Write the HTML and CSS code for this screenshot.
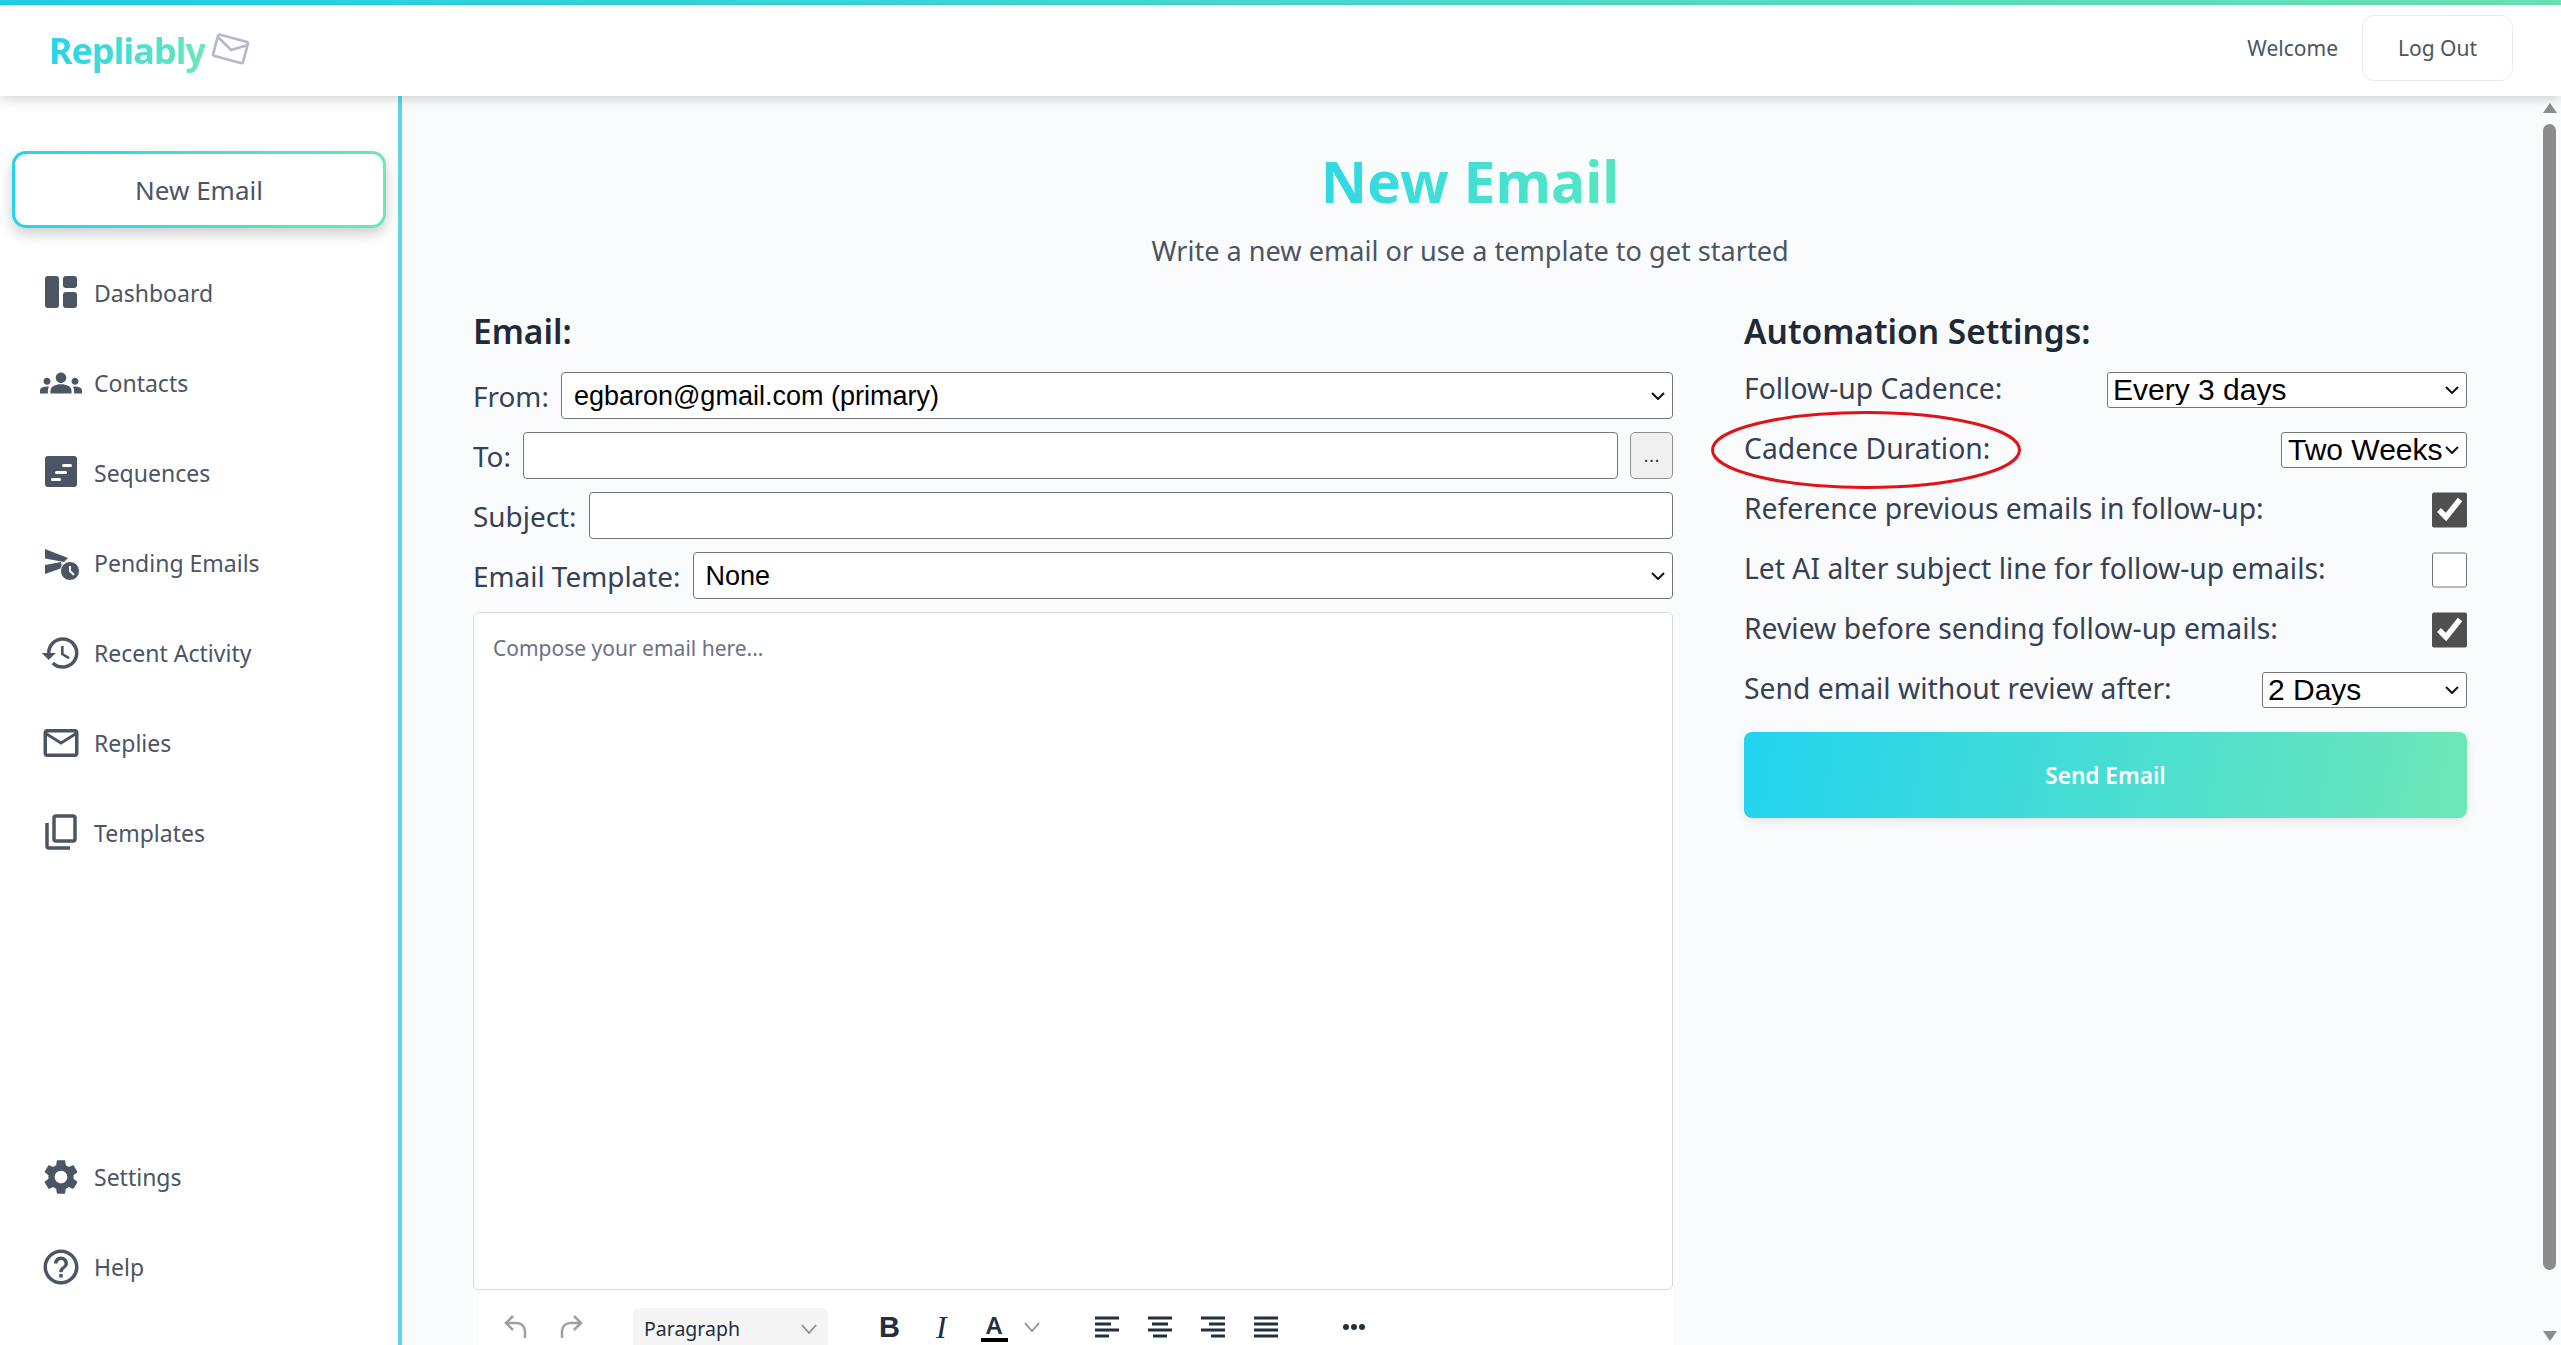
FILE: index.html
```html
<!DOCTYPE html>
<html lang="en">
<head>
    <meta charset="UTF-8">
    <meta name="viewport" content="width=device-width, initial-scale=1.0">
    <title>Repliably - New Email</title>
    <link rel="stylesheet" href="styles.css">
</head>
<body>
    <div class="stripe"></div>
    <header class="topbar">
        <div class="logo">
            <span class="logo-text">Repliably</span>
            <svg class="logo-icon" viewBox="0 0 40 36" fill="none" stroke="#b4b8c8" stroke-width="2.6" stroke-linejoin="round">
                <rect x="4" y="7" width="31" height="22" rx="2" transform="rotate(15 20 18)"/>
                <path d="M7 6l13 13 17-5"/>
            </svg>
        </div>
        <div class="user">
            <span class="welcome">Welcome</span>
            <button class="logout">Log Out</button>
        </div>
    </header>

    <div class="layout">
        <aside class="sidebar">
            <div class="new-email-wrap">
                <button class="new-email-btn">New Email</button>
            </div>
            <nav class="nav">
                <a class="nav-item">
                    <svg class="nav-icon" viewBox="0 0 42 42"><rect x="5" y="4" width="14" height="32" rx="3"/><rect x="23" y="4" width="14" height="12" rx="3"/><rect x="23" y="20" width="14" height="16" rx="3"/></svg>
                    Dashboard
                </a>
                <a class="nav-item">
                    <svg class="nav-icon" viewBox="0 0 24 24"><path d="M4,13c1.1,0,2-0.9,2-2c0-1.1-0.9-2-2-2s-2,0.9-2,2C2,12.1,2.9,13,4,13z M5.13,14.1C4.76,14.04,4.39,14,4,14c-0.99,0-1.93,0.21-2.78,0.58C0.48,14.9,0,15.62,0,16.43V18l4.5,0v-1.61C4.5,15.56,4.73,14.78,5.13,14.1z M20,13c1.1,0,2-0.9,2-2c0-1.1-0.9-2-2-2s-2,0.9-2,2C18,12.1,18.9,13,20,13z M24,16.43c0-0.81-0.48-1.53-1.22-1.85C21.93,14.21,20.99,14,20,14c-0.39,0-0.76,0.04-1.13,0.1c0.4,0.68,0.63,1.46,0.63,2.29V18l4.5,0V16.43z M16.24,13.65c-1.17-0.52-2.61-0.9-4.24-0.9c-1.63,0-3.07,0.39-4.24,0.9C6.68,14.13,6,15.21,6,16.39V18h12v-1.61C18,15.21,17.32,14.13,16.24,13.65z M12,12c1.66,0,3-1.34,3-3s-1.34-3-3-3S9,7.34,9,9S10.34,12,12,12z"/></svg>
                    Contacts
                </a>
                <a class="nav-item">
                    <svg class="nav-icon" viewBox="0 0 42 42"><rect x="5" y="4" width="32" height="31" rx="3"/><rect x="22" y="12" width="10" height="3" rx="1.5" fill="#fff"/><rect x="15" y="19" width="12" height="3" rx="1.5" fill="#fff"/><rect x="11" y="26" width="10" height="3" rx="1.5" fill="#fff"/></svg>
                    Sequences
                </a>
                <a class="nav-item">
                    <svg class="nav-icon" viewBox="0 0 42 42"><path d="M5 7l23 9-4 4-19-3.500zM5 23l16-3 1 6-17 6z"/><circle cx="30" cy="29" r="9.500" stroke="#fff" stroke-width="1"/><path d="M30 24v5l4 4" fill="none" stroke="#fff" stroke-width="2"/></svg>
                    Pending Emails
                </a>
                <a class="nav-item">
                    <svg class="nav-icon" viewBox="0 0 24 24"><path d="M13 3c-4.970 0-9 4.030-9 9H1l3.890 3.890.07.14L9 12H6c0-3.870 3.130-7 7-7s7 3.130 7 7-3.130 7-7 7c-1.930 0-3.680-.79-4.940-2.060l-1.420 1.420C8.270 19.990 10.510 21 13 21c4.970 0 9-4.030 9-9s-4.030-9-9-9zm-1 5v5l4.280 2.540.72-1.210-3.500-2.080V8H12z"/></svg>
                    Recent Activity
                </a>
                <a class="nav-item">
                    <svg class="nav-icon" viewBox="0 0 24 24"><path d="M20 4H4c-1.100 0-1.990.9-1.990 2L2 18c0 1.100.9 2 2 2h16c1.100 0 2-.9 2-2V6c0-1.100-.9-2-2-2zm0 14H4V8l8 5 8-5v10zm-8-7L4 6h16l-8 5z"/></svg>
                    Replies
                </a>
                <a class="nav-item">
                    <svg class="nav-icon icon-line" viewBox="0 0 42 42"><rect x="14" y="4" width="21" height="25" rx="2"/><path d="M7 11v23a2 2 0 0 0 2 2h21"/></svg>
                    Templates
                </a>
            </nav>
            <nav class="nav nav-bottom">
                <a class="nav-item">
                    <svg class="nav-icon" viewBox="0 0 24 24"><path d="M19.140 12.940c.04-.3.06-.61.06-.94 0-.32-.02-.64-.07-.94l2.030-1.580c.18-.14.23-.41.12-.61l-1.920-3.320c-.12-.22-.37-.29-.59-.22l-2.390.96c-.5-.38-1.030-.7-1.620-.94l-.36-2.540c-.04-.24-.24-.41-.48-.41h-3.840c-.24 0-.43.17-.47.41l-.36 2.540c-.59.24-1.130.57-1.620.94l-2.390-.96c-.22-.08-.47 0-.59.22L2.740 8.870c-.12.21-.08.47.12.61l2.030 1.580c-.05.3-.09.63-.09.94s.02.64.07.94l-2.030 1.580c-.18.14-.23.41-.12.61l1.920 3.320c.12.22.37.29.59.22l2.390-.96c.5.38 1.030.7 1.620.94l.36 2.540c.05.24.24.41.48.41h3.840c.24 0 .44-.17.47-.41l.36-2.540c.59-.24 1.130-.56 1.620-.94l2.390.96c.22.08.47 0 .59-.22l1.920-3.320c.12-.22.07-.47-.12-.61l-2.010-1.580zM12 15.600c-1.980 0-3.600-1.620-3.600-3.600s1.620-3.600 3.600-3.600 3.600 1.620 3.600 3.600-1.620 3.600-3.600 3.600z"/></svg>
                    Settings
                </a>
                <a class="nav-item">
                    <svg class="nav-icon" viewBox="0 0 24 24"><path d="M11 18h2v-2h-2v2zm1-16C6.480 2 2 6.480 2 12s4.480 10 10 10 10-4.480 10-10S17.520 2 12 2zm0 18c-4.410 0-8-3.590-8-8s3.590-8 8-8 8 3.590 8 8-3.590 8-8 8zm0-14c-2.210 0-4 1.790-4 4h2c0-1.100.9-2 2-2s2 .9 2 2c0 2-3 1.750-3 5h2c0-2.250 3-2.500 3-5 0-2.210-1.790-4-4-4z"/></svg>
                    Help
                </a>
            </nav>
        </aside>

        <main class="main">
            <h1 class="page-title">New Email</h1>
            <p class="page-sub">Write a new email or use a template to get started</p>

            <div class="columns">
                <section class="email-col">
                    <h2 class="col-title">Email:</h2>
                    <div class="form-row">
                        <label>From:</label>
                        <select class="field"><option>egbaron@gmail.com (primary)</option></select>
                    </div>
                    <div class="form-row">
                        <label>To:</label>
                        <input class="field" type="text">
                        <button class="more-btn">...</button>
                    </div>
                    <div class="form-row">
                        <label>Subject:</label>
                        <input class="field" type="text">
                    </div>
                    <div class="form-row">
                        <label>Email Template:</label>
                        <select class="field"><option>None</option></select>
                    </div>
                    <div class="editor">
                        <div class="editor-body">Compose your email here...</div>
                        <div class="toolbar">
                            <svg class="tool tool-hist" viewBox="0 0 24 26"><path d="M9 2L2 9l7 7M2 9h11a8 8 0 0 1 8 8v7"/></svg>
                            <svg class="tool tool-hist" viewBox="0 0 24 26"><path d="M15 2l7 7-7 7M22 9H11a8 8 0 0 0-8 8v7"/></svg>
                            <div class="format-select">
                                <span>Paragraph</span>
                                <svg class="chev" viewBox="0 0 16 10"><path d="M1 1l7 8 7-8"/></svg>
                            </div>
                            <span class="tool-b">B</span>
                            <span class="tool-i">I</span>
                            <span class="tool-a">A</span>
                            <svg class="chev chev-a" viewBox="0 0 16 10"><path d="M1 1l7 8 7-8"/></svg>
                            <div class="aligns">
                                <svg class="tool-align" viewBox="0 0 24 24"><path d="M0 3h24M0 9h16M0 15h24M0 21h14"/></svg>
                                <svg class="tool-align" viewBox="0 0 24 24"><path d="M0 3h24M4 9h16M0 15h24M5 21h14"/></svg>
                                <svg class="tool-align" viewBox="0 0 24 24"><path d="M0 3h24M8 9h16M0 15h24M10 21h14"/></svg>
                                <svg class="tool-align" viewBox="0 0 24 24"><path d="M0 3h24M0 9h24M0 15h24M0 21h24"/></svg>
                            </div>
                            <svg class="tool-more" viewBox="0 0 24 6"><circle cx="4" cy="3" r="3"/><circle cx="12" cy="3" r="3"/><circle cx="20" cy="3" r="3"/></svg>
                        </div>
                    </div>
                </section>

                <section class="auto-col">
                    <h2 class="col-title">Automation Settings:</h2>
                    <div class="auto-row">
                        <label>Follow-up Cadence:</label>
                        <select class="mini-select cadence"><option>Every 3 days</option></select>
                    </div>
                    <div class="auto-row">
                        <label>Cadence Duration:</label>
                        <select class="mini-select duration"><option>Two Weeks</option></select>
                        <svg class="circled" viewBox="0 0 310 78"><ellipse cx="155" cy="39" rx="153.500" ry="37.500"/></svg>
                    </div>
                    <div class="auto-row">
                        <label>Reference previous emails in follow-up:</label>
                        <input class="check" type="checkbox" checked>
                    </div>
                    <div class="auto-row">
                        <label>Let AI alter subject line for follow-up emails:</label>
                        <input class="check" type="checkbox">
                    </div>
                    <div class="auto-row">
                        <label>Review before sending follow-up emails:</label>
                        <input class="check" type="checkbox" checked>
                    </div>
                    <div class="auto-row">
                        <label>Send email without review after:</label>
                        <select class="mini-select after"><option>2 Days</option></select>
                    </div>
                    <button class="send-btn">Send Email</button>
                </section>
            </div>
        </main>

        <div class="scrollbar">
            <span class="arrow arrow-up"></span>
            <span class="thumb"></span>
            <span class="arrow arrow-down"></span>
        </div>
    </div>
</body>
</html>
```

FILE: styles.css
```css
* {
    margin: 0;
    padding: 0;
    box-sizing: border-box;
}

:root {
    --text-color: #4b5563;
    --label-color: #374151;
    --page-bg: #f9fbfd;
    --brand: linear-gradient(100deg, #22d3ee, #6ee7b7);
    --select-arrow: url("data:image/svg+xml,%3Csvg xmlns='http://www.w3.org/2000/svg' viewBox='0 0 14 8'%3E%3Cpath d='M1 1l6 6 6-6' fill='none' stroke='%23111' stroke-width='2'/%3E%3C/svg%3E");
}

html, body {
    height: 100%;
    overflow: hidden;
}

body {
    display: flex;
    flex-direction: column;
    font-family: "Noto Sans", "Open Sans", sans-serif;
    color: var(--text-color);
    background: #fff;
}

.stripe {
    height: 5px;
    flex: none;
    background: linear-gradient(90deg, #22d3ee, #6ee7b7);
}

/* Top bar */
.topbar {
    flex: none;
    height: 91px;
    display: flex;
    justify-content: space-between;
    align-items: center;
    padding: 0 48px 0 49px;
    background: #fff;
    box-shadow: 0 3px 12px rgba(0, 0, 0, 0.18);
    z-index: 2;
}

.logo {
    display: flex;
    align-items: center;
    gap: 6px;
}

.logo-text {
    font-size: 36px;
    font-weight: 700;
    letter-spacing: -1px;
    background: var(--brand);
    -webkit-background-clip: text;
    background-clip: text;
    color: transparent;
}

.logo-icon {
    width: 40px;
    height: 36px;
    margin-bottom: 4px;
}

.user {
    display: flex;
    align-items: center;
    gap: 24px;
    margin-bottom: 5px;
}

.welcome {
    font-size: 21px;
}

.logout {
    width: 151px;
    height: 66px;
    font: inherit;
    font-size: 21px;
    color: var(--text-color);
    background: #fff;
    border: 1px solid #e8eaee;
    border-radius: 12px;
}

/* Sidebar */
.layout {
    flex: 1;
    display: flex;
    min-height: 0;
}

.sidebar {
    width: 402px;
    flex: none;
    display: flex;
    flex-direction: column;
    border-right: 4px solid #5ad8e8;
    background: #fff;
}

.new-email-wrap {
    padding: 55px 12px 0;
}

.new-email-btn {
    width: 100%;
    height: 77px;
    font: inherit;
    font-size: 26px;
    color: var(--text-color);
    border: 3px solid transparent;
    border-radius: 14px;
    background: linear-gradient(#fff, #fff) padding-box, linear-gradient(95deg, #22d3ee, #6ee7b7) border-box;
    box-shadow: 0 6px 14px rgba(0, 0, 0, 0.2);
}

.nav {
    display: flex;
    flex-direction: column;
    margin-top: 20px;
}

.nav-bottom {
    margin-top: auto;
    padding-bottom: 33px;
}

.nav-item {
    height: 90px;
    display: flex;
    align-items: center;
    gap: 12px;
    padding-left: 40px;
    font-size: 23px;
    color: var(--text-color);
}

.nav-icon {
    width: 42px;
    height: 42px;
    flex: none;
    fill: #4b5563;
}

.icon-line {
    fill: none;
    stroke: #4b5563;
    stroke-width: 3.500;
}

/* Main */
.main {
    flex: 1;
    min-width: 0;
    overflow: hidden;
    padding: 46px 73px 0 71px;
    background: var(--page-bg);
}

.page-title {
    width: fit-content;
    margin: 0 auto;
    font-size: 57px;
    line-height: 78px;
    font-weight: 700;
    background: linear-gradient(100deg, #2fd8e6, #58e6c0);
    -webkit-background-clip: text;
    background-clip: text;
    color: transparent;
}

.page-sub {
    margin-top: 11px;
    font-size: 27.100px;
    line-height: 40px;
    text-align: center;
}

.columns {
    display: grid;
    grid-template-columns: 1200px 723px;
    gap: 71px;
    margin-top: 36px;
}

.col-title {
    font-size: 33.500px;
    line-height: 48px;
    font-weight: 600;
    color: #1f2937;
    margin-bottom: 17px;
}

.form-row {
    display: flex;
    align-items: center;
    gap: 12px;
    height: 47px;
    margin-bottom: 13px;
}

.form-row label, .auto-row label {
    font-size: 27.900px;
    color: var(--label-color);
    white-space: nowrap;
}

.auto-row label {
    font-size: 28.300px;
    margin-bottom: 5px;
}

.field {
    flex: 1;
    min-width: 0;
    height: 47px;
    padding: 0 12px;
    font-family: "Liberation Sans", Arial, sans-serif;
    font-size: 27px;
    color: #000;
    background: #fff;
    border: 1px solid #767676;
    border-radius: 4px;
}

select.field, .mini-select {
    appearance: none;
    background: #fff var(--select-arrow) no-repeat right 7px center / 14px 8px;
}

.more-btn {
    width: 43px;
    height: 47px;
    font-size: 20px;
    color: #333;
    background: #f0f0f0;
    border: 1px solid #8f8f8f;
    border-radius: 5px;
}

.editor {
    background: #fff;
}

.editor-body {
    height: 678px;
    padding: 21px 19px;
    font-size: 21px;
    color: #6b7280;
    background: #fff;
    border: 1px solid #d8dadd;
    border-radius: 5px;
}

.toolbar {
    display: flex;
    align-items: center;
    height: 57px;
    padding: 17px 0 0 30px;
    line-height: 1;
}

.tool {
    fill: none;
    stroke: #a0a0a0;
    stroke-width: 2.500;
}

.tool-hist {
    width: 26px;
    height: 26px;
    margin-right: 29px;
}

.format-select {
    width: 195px;
    height: 39px;
    display: flex;
    align-items: center;
    justify-content: space-between;
    padding: 4px 11px 0 11px;
    margin-left: 20px;
    font-size: 19.500px;
    color: #222f3e;
    background: #f5f5f5;
    border-radius: 5px 5px 0 0;
}

.chev {
    width: 16px;
    height: 10px;
    fill: none;
    stroke: #8a8f98;
    stroke-width: 1.800;
}

.tool-b {
    margin-left: 51px;
    font-family: "Liberation Sans", Arial, sans-serif;
    font-size: 29px;
    font-weight: 700;
    color: #222f3e;
}

.tool-i {
    margin-left: 36px;
    font-family: "Liberation Serif", serif;
    font-size: 32px;
    font-style: italic;
    color: #222f3e;
}

.tool-a {
    margin-left: 34px;
    width: 27px;
    font-size: 24px;
    line-height: 26px;
    font-weight: 600;
    text-align: center;
    color: #222f3e;
    border-bottom: 4px solid #000;
}

.chev-a {
    margin-left: 16px;
}

.aligns {
    display: flex;
    gap: 29px;
    margin-left: 55px;
}

.tool-align {
    width: 24px;
    height: 24px;
    stroke: #222f3e;
    stroke-width: 3;
}

.tool-more {
    width: 24px;
    height: 6px;
    margin-left: 64px;
    fill: #222f3e;
}

/* Automation column */
.auto-row {
    position: relative;
    display: flex;
    justify-content: space-between;
    align-items: center;
    height: 36px;
    margin-bottom: 24px;
}

.mini-select {
    height: 36px;
    padding: 0 5px 2px;
    font-family: "Liberation Sans", Arial, sans-serif;
    font-size: 30px;
    color: #000;
    border: 1px solid #767676;
    border-radius: 3px;
}

.cadence {
    width: 360px;
}

.duration {
    width: 186px;
    padding-left: 6px;
}

.after {
    width: 205px;
}

.check {
    width: 35px;
    height: 36px;
    accent-color: #4f4f4f;
}

/* hand-drawn annotation over the label */
.circled {
    position: absolute;
    left: -33px;
    top: -21px;
    width: 310px;
    height: 78px;
    fill: none;
    stroke: #e0131a;
    stroke-width: 3;
}

.send-btn {
    width: 100%;
    height: 86px;
    font: inherit;
    font-size: 22.600px;
    font-weight: 600;
    color: #fff;
    border: none;
    border-radius: 8px;
    background: linear-gradient(100deg, #22d3ee, #6ee7b7);
    box-shadow: 0 4px 12px rgba(0, 0, 0, 0.08);
}

/* Scrollbar */
.scrollbar {
    width: 21px;
    flex: none;
    display: flex;
    flex-direction: column;
    align-items: center;
    padding: 7px 2px 4px 0;
    background: var(--page-bg);
}

.thumb {
    flex: none;
    height: 1146px;
    width: 13px;
    margin-top: 11px;
    border-radius: 7px;
    background: #8c8c8c;
}

.arrow {
    width: 0;
    height: 0;
    border-left: 7px solid transparent;
    border-right: 7px solid transparent;
}

.arrow-up {
    border-bottom: 10px solid #8c8c8c;
}

.arrow-down {
    margin-top: auto;
    border-top: 10px solid #8c8c8c;
}
```
